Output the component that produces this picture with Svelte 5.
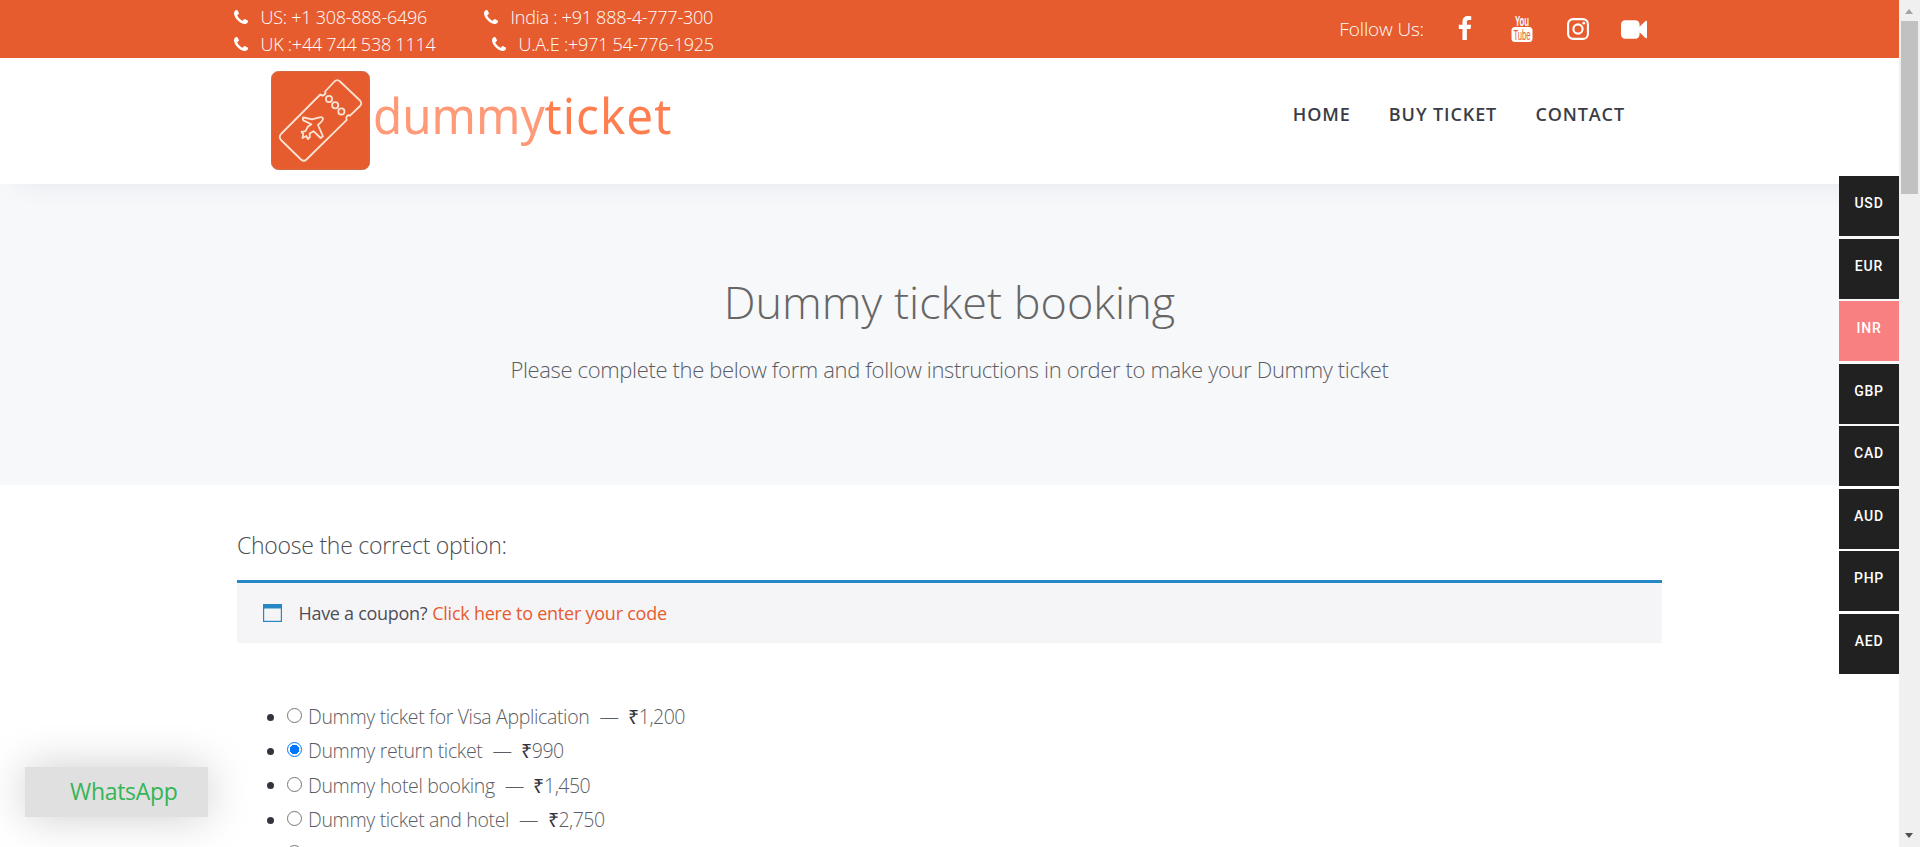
<script>
  const phonePath =
    'M1600 1240q0 27-10 70.5t-21 68.5q-21 50-122 106-94 51-186 51-27 0-53-3.5t-57.5-12.5-47-14.5-55.5-20.5-49-18q-98-35-175-83-127-79-264-216t-216-264q-48-77-83-175-3-9-18-49t-20.5-55.5-14.5-47-12.5-57.5-3.5-53q0-92 51-186 56-101 106-122 25-11 68.5-21t70.5-10q14 0 21 3 18 6 53 76 11 19 30 54t35 63.5 31 53.5q3 4 17.5 25t21.5 35.5 7 28.5q0 20-28.5 50t-62 55-62 53-28.5 46q0 9 5 22.5t8.5 20.5 14 24 11.5 19q76 137 174 235t235 174q2 1 19 11.5t24 14 20.5 8.5 22.5 5q18 0 46-28.5t53-62 55-62 50-28.5q14 0 28.5 7t35.5 21.5 25 17.5q25 15 53.5 31t63.5 35 54 30q70 35 76 53 3 7 3 21z';

  const currencies = ['USD', 'EUR', 'INR', 'GBP', 'CAD', 'AUD', 'PHP', 'AED'];
  const options = [
    { name: 'Dummy ticket for Visa Application', price: '1,200' },
    { name: 'Dummy return ticket', price: '990' },
    { name: 'Dummy hotel booking', price: '1,450' },
    { name: 'Dummy ticket and hotel', price: '2,750' },
    { name: 'Travel medical insurance', price: '1,500' }
  ];
  let currency = $state('INR');
  let selected = $state(1);
</script>

{#snippet phone(text)}
  <span class="phone">
    <svg viewBox="192 128 1408 1408" width="14" height="14"><path d={phonePath} fill="#fff" /></svg>
    <span>{text}</span>
  </span>
{/snippet}

<div class="page">
  <div class="content">
    <div class="topbar">
      <div class="phones">
        <div class="row">{@render phone('US: +1 308-888-6496')}{@render phone('India : +91 888-4-777-300')}</div>
        <div class="row second">{@render phone('UK :+44 744 538 1114')}{@render phone('U.A.E :+971 54-776-1925')}</div>
      </div>
      <div class="social">
        <span class="follow">Follow Us:</span>
        <svg class="fb" viewBox="479 0 864 1664" width="14" height="24"><path fill="#fff" d="M1343 12v264h-157q-86 0-116 36t-30 108v189h293l-39 296h-254v759h-306v-759h-255v-296h255v-218q0-186 104-288.5t277-102.5q147 0 228 12z" /></svg>
        <svg class="yt" viewBox="0 0 22 26" width="22" height="26">
          <text x="4" y="10" textLength="14" lengthAdjust="spacingAndGlyphs" font-size="14" fill="#fff">You</text>
          <rect x="0.5" y="11" width="21" height="15" rx="3.5" fill="#fff" />
          <text x="2.5" y="23.5" textLength="17" lengthAdjust="spacingAndGlyphs" font-size="14" font-weight="400" fill="#e65c2e">Tube</text>
        </svg>
        <svg class="ig" viewBox="0 0 22 22" width="22" height="22" fill="none" stroke="#fff">
          <rect x="1.1" y="1.1" width="19.8" height="19.8" rx="5" stroke-width="2.1" />
          <circle cx="11" cy="11" r="4.6" stroke-width="2.1" />
          <circle cx="16.8" cy="5.2" r="1.4" fill="#fff" stroke="none" />
        </svg>
        <svg class="cam" viewBox="0 256 1792 1280" width="26" height="19"><path fill="#fff" d="M1792 352v1088q0 42-39 59-13 5-25 5-27 0-45-19l-403-403v166q0 119-84.5 203.5t-203.5 84.5h-704q-119 0-203.5-84.5t-84.5-203.5v-704q0-119 84.5-203.5t203.5-84.5h704q119 0 203.5 84.5t84.5 203.5v165l403-402q18-19 45-19 12 0 25 5 39 17 39 59z" /></svg>
      </div>
    </div>

    <header>
      <div class="logo">
        <svg viewBox="0 0 99 99" width="99" height="99" fill="none" stroke="#fbe3d2" stroke-width="1.8" stroke-linejoin="round">
          <rect x="0.5" y="0.5" width="98" height="98" rx="7" fill="#e65c2e" stroke="#cf6a48" stroke-width="1" />
          <path d="M54 20.5L63.5 10.5Q66.3 7.8 69 10.5L89 29.5Q91.5 32.3 89 35L79 44.7Q77.5 43.5 75.8 45.2Q74.5 47 75.8 48.8L35.5 88.5Q32.8 91 30 88.5L10 69Q7.5 66 10 63L49.3 23.5Q51.5 25.5 53.5 23.5Q55.2 22 54 20.5Z" />
          <circle cx="58" cy="28" r="3.1" /><circle cx="64.2" cy="34.2" r="3.1" /><circle cx="70.4" cy="40.5" r="3.1" />
          <path d="M32.8 46.5L41 48.4L47.5 46.6Q52 45.3 52 48Q51.8 49.8 47 54L52 65.3L49.6 67L42.5 60.2L38.6 62.5L38.9 66L36.9 68L35.4 65L31.5 67L32.3 62.9L30.5 60.8L34.5 60.2L36.7 55.8L40.4 53.3L32.3 49.4Q31 46.5 32.8 46.5Z" />
        </svg>
        <div class="word"><span>dummy</span><b>ticket</b></div>
      </div>
      <nav><a>HOME</a><a>BUY TICKET</a><a>CONTACT</a></nav>
    </header>

    <section class="hero">
      <h1>Dummy ticket booking</h1>
      <p>Please complete the below form and follow instructions in order to make your Dummy ticket</p>
    </section>

    <main>
      <h2>Choose the correct option:</h2>
      <div class="coupon">
        <svg viewBox="0 0 19 18" width="19" height="18"><rect x="0.6" y="0.6" width="17.8" height="16.8" fill="none" stroke="#2588c4" stroke-width="1.2" /><rect width="19" height="4.5" fill="#2588c4" /></svg>
        <span class="have">Have a coupon?</span>
        <span class="link">Click here to enter your code</span>
      </div>
      <ul>
        {#each options as option, i}
          <li>
            <i class="bullet"></i>
            <button class="radio" class:on={selected === i} aria-label={option.name} onclick={() => (selected = i)}></button>
            <span class="label"><span>{option.name}</span><span class="dash">—</span><span class="rupee">₹</span><span class="price">{option.price}</span></span>
          </li>
        {/each}
      </ul>
    </main>
  </div>

  <div class="scrollbar"><i class="up"></i><i class="thumb"></i><i class="down"></i></div>
  <div class="currencies">
    {#each currencies as c}
      <button class:active={currency === c} onclick={() => (currency = c)}>{c}</button>
    {/each}
  </div>
  <div class="whatsapp">WhatsApp</div>
</div>

<style>
  :global(body) { margin: 0; overflow: hidden; }
  * { box-sizing: border-box; }
  .page { position: relative; display: flex; width: 1920px; height: 847px; overflow: hidden; background: #fff; font-family: "Open Sans", sans-serif; color: #43454b; }
  .content { width: 1899px; height: 847px; overflow: hidden; }
  svg { display: block; flex: none; }
  .topbar { display: flex; height: 58px; background: #e65c2e; color: #fff; font-weight: 300; padding: 4px 252px 0 234px; justify-content: space-between; }
  .phones { font-size: 18px; line-height: 27px; letter-spacing: -0.25px; }
  .row { display: flex; }
  .phone { display: flex; width: 250px; gap: 12.5px; white-space: nowrap; }
  .phone svg { margin-top: 6px; }
  .second .phone { width: 258px; }
  .social { display: flex; height: 50px; }
  .follow { font-size: 19px; line-height: 51px; margin-right: 34px; letter-spacing: -0.15px; }
  .fb { margin: 12px 39px 0 0; }
  .yt { margin: 12px 34px 0 0; overflow: visible; font-family: "Liberation Sans", sans-serif; font-weight: 700; }
  .ig { margin: 14px 32px 0 0; }
  .cam { margin-top: 16px; }
  header { position: relative; display: flex; justify-content: space-between; height: 126px; padding: 13px 274px 0 271px; background: #fff; box-shadow: 0 15px 30px -20px rgba(50, 50, 93, 0.12); }
  .logo { display: flex; gap: 2.5px; }
  .word { font: 400 50px/68px "Noto Sans", sans-serif; color: #ff9a78; padding-top: 10px; transform: scaleX(0.95); transform-origin: left top; }
  .word b { font-weight: 400; color: #ff7e50; letter-spacing: 1.1px; }
  nav { display: flex; gap: 38.2px; font-size: 18px; font-weight: 600; letter-spacing: 0.9px; line-height: 26px; padding-top: 30px; color: #3a3d45; }
  .hero { height: 301px; padding-top: 89px; background: #f7f8fa; text-align: center; }
  h1 { margin: 0; font-size: 45px; font-weight: 300; line-height: 58px; color: #666; }
  p { margin: 24px 0 0; font-size: 22px; font-weight: 300; letter-spacing: -0.35px; line-height: 29px; color: #5c5d64; }
  main { padding: 42px 237px 0; }
  h2 { margin: 0; font-size: 23px; font-weight: 300; letter-spacing: -0.25px; line-height: 36px; color: #4b4d53; }
  .coupon { display: flex; align-items: center; height: 63px; margin-top: 17px; border-top: 3px solid #2588c4; background: #f5f5f8; padding-left: 26px; font-size: 18px; letter-spacing: -0.24px; white-space: nowrap; }
  .have { margin: 0 5px 0 16.5px; letter-spacing: -0.3px; color: #4d4f56; }
  .link { color: #e65c2e; }
  ul { list-style: none; margin: 57px 0 0; padding: 0 0 0 30px; }
  li { display: flex; align-items: center; height: 34.3px; font-size: 19.5px; font-weight: 300; letter-spacing: -0.35px; line-height: 34px; white-space: nowrap; color: #5c5d63; }
  .label { display: flex; align-items: center; }
  li:last-child .label { margin-top: 2px; }
  .bullet { width: 7px; height: 7px; border-radius: 50%; background: #34343e; margin-right: 13px; }
  .radio { width: 15px; height: 15px; border-radius: 50%; border: 1px solid #767676; background: #fff; padding: 0; margin: -3px 6px 0 0; }
  .radio.on { border: 1.5px solid #0075ff; background: radial-gradient(circle, #0075ff 4.5px, transparent 5px); }
  .dash { margin: 0 9.5px 0 10px; }
  .rupee { font-weight: 500; color: #34343e; }
  .price { letter-spacing: -0.5px; }
  .scrollbar { position: relative; width: 21px; background: #f0f0f0; }
  .thumb { position: absolute; left: 2px; top: 21px; width: 17px; height: 173px; background: #c1c1c1; }
  .up, .down { position: absolute; left: 6px; border: 4.5px solid transparent; }
  .up { top: 9px; border-top: 0; border-bottom: 5px solid #a3a3a3; }
  .down { bottom: 9px; border-bottom: 0; border-top: 5px solid #505050; }
  .currencies { position: absolute; left: 1839px; top: 176px; display: flex; flex-direction: column; gap: 2.5px; }
  .currencies button { width: 60px; height: 60px; border: 0; background: #212121; color: #fff; font: 500 14px/20px Roboto, sans-serif; letter-spacing: 0.8px; padding: 0 0 6px; }
  .currencies .active { background: #f88080; }
  .whatsapp { position: absolute; left: 25px; top: 767px; width: 183px; height: 50px; padding-left: 45px; background: #e0e0e0; color: #36b456; font-size: 23px; letter-spacing: -0.3px; line-height: 48px; box-shadow: 0 0 45px rgba(0, 0, 0, 0.2); }
</style>
